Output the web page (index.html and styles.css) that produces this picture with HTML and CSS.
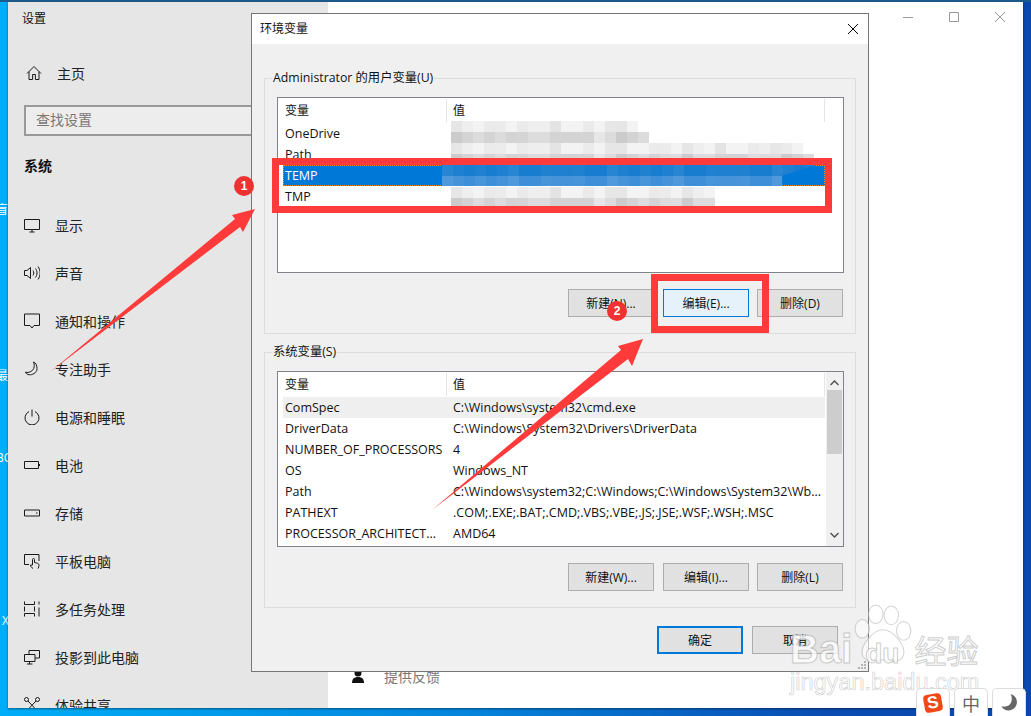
FILE: index.html
```
<!DOCTYPE html>
<html lang="zh">
<head>
<meta charset="utf-8">
<title>环境变量</title>
<link rel="stylesheet" href="styles.css">
</head>
<body>
<div class="desktop">
  <span class="edge edge-a">盲</span>
  <span class="edge edge-b">最</span>
  <span class="edge edge-c">BC</span>
  <span class="edge edge-d">X</span>

  <div class="settings">
    <aside class="sidebar">
      <div class="app-title">设置</div>
      <div class="home">
        <svg class="icon" viewBox="0 0 16 16"><path d="M1 8.500 8 1.500l7 7M3 6.800V14.500h3.600V9.500h2.800v5H13V6.800"/></svg>
        <span>主页</span>
      </div>
      <div class="search">查找设置</div>
      <div class="heading">系统</div>
      <nav class="nav">
        <div class="nav-item"><svg class="icon" viewBox="0 0 16 16"><path d="M.5 2.500h15v10H.5zM8 12.500v2.500M5.500 15h5"/></svg><span>显示</span></div>
        <div class="nav-item"><svg class="icon" viewBox="0 0 16 16"><path d="M.5 5.500h2.500L6.500 2.500v11L3 10.500H.5zM9 5.500c1 1.500 1 3.500 0 5M11.500 3.500c2 2.500 2 6.500 0 9M14 1.500c2.800 3.800 2.800 9.200 0 13"/></svg><span>声音</span></div>
        <div class="nav-item"><svg class="icon" viewBox="0 0 16 16"><path d="M.5 1h15v11.500h-5.500L8 15l-2-2.500H.5z"/></svg><span>通知和操作</span></div>
        <div class="nav-item"><svg class="icon" viewBox="0 0 16 16"><path d="M9.500 1C12 2 13 4.500 13 7.500c0 .8-.1 1.500-.3 2.100C11 13 7 14.500 4 13.500 2.800 13 1.800 12.200 1.300 11.300 4.800 12 8.500 10.500 9.700 7.500 10.500 5.500 10.400 3 9.500 1z"/></svg><span>专注助手</span></div>
        <div class="nav-item"><svg class="icon" viewBox="0 0 16 16"><path d="M8 .5v7M5 2.600a7 7 0 1 0 6 0"/></svg><span>电源和睡眠</span></div>
        <div class="nav-item"><svg class="icon" viewBox="0 0 16 16"><path d="M.5 4.500h14v7H.5zM15.500 7v2"/></svg><span>电池</span></div>
        <div class="nav-item"><svg class="icon" viewBox="0 0 16 16"><path d="M.5 5h15v6H.5zM12 8h1.500"/></svg><span>存储</span></div>
        <div class="nav-item"><svg class="icon" viewBox="0 0 16 16"><path d="M5 11.500H.5v-10h14.500V8M9 15.500c-1.500-1-2.500-2-2.500-3.500L8.500 12V6.500a1 1 0 0 1 2 0V9.500l3 .8c1 .3 1.500 1 1.500 2 0 1.200-.5 2.200-1 3.200"/></svg><span>平板电脑</span></div>
        <div class="nav-item"><svg class="icon" viewBox="0 0 16 16"><path d="M.5 .5v3h10v-3M.5 15.500v-3h10v3M.5 5.500v5M10.500 5.500v5M15 .5v3M15 6.500v9"/></svg><span>多任务处理</span></div>
        <div class="nav-item"><svg class="icon" viewBox="0 0 16 16"><path d="M5 5V1.500h10.500V9H11M.5 5.500H11V12.500H.5zM3 15h5.500M5.500 12.500V15"/></svg><span>投影到此电脑</span></div>
        <div class="nav-item"><svg class="icon" viewBox="0 0 16 16"><circle cx="2.500" cy="2.500" r="2"/><circle cx="13.500" cy="2.500" r="2"/><circle cx="2" cy="14" r="1.500"/><circle cx="14" cy="14" r="1.500"/><path d="M4 4l8 8.500M12 4 4 12.500"/></svg><span>体验共享</span></div>
      </nav>
    </aside>
    <main class="pane">
      <div class="controls">
        <span class="control"><svg viewBox="0 0 10 10"><path d="M0 5.500h10"/></svg></span>
        <span class="control"><svg viewBox="0 0 10 10"><path d="M.5.5h9v9h-9z"/></svg></span>
        <span class="control"><svg viewBox="0 0 10 10"><path d="M0 0l10 10M10 0 0 10"/></svg></span>
      </div>
      <div class="feedback">
        <svg class="feedback-icon" viewBox="0 0 12 14"><circle cx="6" cy="4" r="3.500"/><path d="M0 14c0-4 2-6 6-6s6 2 6 6z"/></svg>
        <span>提供反馈</span>
      </div>
    </main>
  </div>

  <section class="dialog">
    <header class="dialog-title">
      <span>环境变量</span>
      <svg class="dialog-close" viewBox="0 0 10 10"><path d="M0 0l10 10M10 0 0 10"/></svg>
    </header>
    <div class="dialog-body">
      <fieldset class="group">
        <legend>Administrator 的用户变量(U)</legend>
        <div class="list">
          <div class="list-head"><span class="col-name">变量</span><span class="col-value">值</span></div>
          <div class="row"><span>OneDrive</span><span></span></div>
          <div class="row"><span>Path</span><span></span></div>
          <div class="row selected"><span>TEMP</span><span></span></div>
          <div class="row"><span>TMP</span><span></span></div>
          <div class="mask m1"></div>
          <div class="mask m2"></div>
          <div class="mask m3"></div>
          <div class="mask m4"></div>
          <div class="mask m5"></div>
          <div class="mask m6"></div>
          <div class="mask m7"></div>
          <div class="mask m8"></div>
        </div>
        <div class="actions">
          <button class="btn">新建(N)...</button>
          <button class="btn hover">编辑(E)...</button>
          <button class="btn">删除(D)</button>
        </div>
      </fieldset>
      <fieldset class="group second">
        <legend>系统变量(S)</legend>
        <div class="list">
          <div class="list-head"><span class="col-name">变量</span><span class="col-value">值</span></div>
          <div class="row tinted"><span>ComSpec</span><span>C:\Windows\system32\cmd.exe</span></div>
          <div class="row"><span>DriverData</span><span>C:\Windows\System32\Drivers\DriverData</span></div>
          <div class="row"><span>NUMBER_OF_PROCESSORS</span><span>4</span></div>
          <div class="row"><span>OS</span><span>Windows_NT</span></div>
          <div class="row"><span>Path</span><span>C:\Windows\system32;C:\Windows;C:\Windows\System32\Wb...</span></div>
          <div class="row"><span>PATHEXT</span><span>.COM;.EXE;.BAT;.CMD;.VBS;.VBE;.JS;.JSE;.WSF;.WSH;.MSC</span></div>
          <div class="row"><span>PROCESSOR_ARCHITECT...</span><span>AMD64</span></div>
          <div class="scrollbar">
            <svg class="arrow" viewBox="0 0 9 6"><path d="M.5 5 4.500 1l4 4"/></svg>
            <div class="track"><div class="thumb"></div></div>
            <svg class="arrow" viewBox="0 0 9 6"><path d="M.5 1l4 4 4-4"/></svg>
          </div>
        </div>
        <div class="actions">
          <button class="btn">新建(W)...</button>
          <button class="btn">编辑(I)...</button>
          <button class="btn">删除(L)</button>
        </div>
      </fieldset>
      <div class="footer">
        <button class="btn primary">确定</button>
        <button class="btn">取消</button>
      </div>
    </div>
    <svg class="grip" viewBox="0 0 8 8"><path d="M6 0h2v2H6zM3 3h2v2H3zM6 3h2v2H6zM0 6h2v2H0zM3 6h2v2H3zM6 6h2v2H6z"/></svg>
  </section>

  <svg class="marks" viewBox="0 0 1031 716">
    <path class="mark-box" d="M275.500 161.500h553v48h-553zM654.500 277.500h111v52h-111z"/>
    <path class="mark-arrow" d="M50 372 235 219 232 215 255 209 243 232 240 227z"/>
    <path class="mark-arrow" d="M432 510 621 350 618 346 643 339 632 366 628 359z"/>
  </svg>
  <span class="badge badge-1">1</span>
  <span class="badge badge-2">2</span>

  <div class="watermark">
    <svg class="paw" viewBox="0 0 60 60"><ellipse cx="10" cy="24" rx="7" ry="9"/><ellipse cx="23" cy="10" rx="7" ry="9"/><ellipse cx="38" cy="11" rx="7" ry="9"/><ellipse cx="50" cy="26" rx="7" ry="9"/><path d="M30 25c9 0 22 14 20 24-2 8-12 7-20 5-8 2-18 3-20-5-2-10 11-24 20-24z"/></svg>
    <div class="wm-main"><span class="wm-bai">Bai</span><span class="wm-du">du</span><span class="wm-cn">经验</span></div>
    <div class="wm-url">jingyan.baidu.com</div>
  </div>

  <div class="tray">
    <span class="tile"><span class="sogou">S</span></span>
    <span class="tile tile-text">中</span>
    <span class="tile"><svg class="moon" viewBox="0 0 16 16"><path d="M9 0c3 .8 6 3.500 6 7.500C15 12 11.500 15.500 7 15.500 4 15.500 1.500 14 .5 11.500c4 1.200 8-.5 9.200-4C10.500 5 10.300 2 9 0z"/></svg></span>
  </div>
</div>
</body>
</html>
```
FILE: styles.css
```
* { box-sizing: border-box; }
html, body { margin: 0; padding: 0; }
body {
  font-family: "Open Sans", "Noto Sans CJK SC", sans-serif;
  font-size: 12px;
  color: #111;
  overflow: hidden;
}
.desktop {
  position: relative;
  width: 1031px;
  height: 716px;
  padding: 2px 8px 8px;
  overflow: hidden;
  background:
    linear-gradient(#1b5a8c 0 2px, transparent 2px),
    linear-gradient(90deg, #00adf8 0%, #0585dc 45%, #0a4cb2 80%, #0a47ae 100%);
}
.edge { position: absolute; left: -4px; color: #fff; font-size: 12px; line-height: 14px; }
.edge-a { top: 203px; }
.edge-b { top: 369px; }
.edge-c { top: 451px; }
.edge-d { top: 614px; left: 2px; }

.settings { position: relative; display: flex; height: 706px; box-shadow: 0 1px 2px rgba(0,0,0,.45); }
.sidebar { width: 320px; background: #e6e6e6; padding-left: 16px; overflow: hidden; flex: none; }
.app-title { height: 32px; line-height: 34px; margin-left: -2px; font-size: 12px; }
.icon { width: 16px; height: 16px; flex: none; fill: none; stroke: #1a1a1a; stroke-width: 1; }
.home { display: flex; align-items: center; gap: 15px; height: 48px; margin-top: 15px; padding-left: 2px; font-size: 14px; color: #222; }
.search {
  width: 300px;
  height: 31px;
  margin-top: 8px;
  border: 2px solid #999;
  background: #ededed;
  padding-left: 10px;
  font-size: 14px;
  line-height: 26px;
  color: #777;
}
.heading { height: 36px; margin-top: 12px; line-height: 36px; font-size: 14px; font-weight: 700; color: #111; }
.nav { margin-top: 17px; }
.nav-item { display: flex; align-items: center; gap: 15px; height: 48px; font-size: 14px; color: #222; }

.pane { flex: 1; background: #fff; display: flex; flex-direction: column; justify-content: space-between; }
.controls { display: flex; justify-content: flex-end; height: 30px; }
.control { display: flex; align-items: center; justify-content: center; width: 46px; }
.control svg { width: 10px; height: 10px; fill: none; stroke: #999; stroke-width: 1; }
.feedback { display: flex; align-items: center; gap: 20px; height: 20px; margin-bottom: 22px; padding-left: 24px; font-size: 14px; color: #777; }
.feedback-icon { width: 12px; height: 14px; fill: #111; }

.dialog {
  position: absolute;
  left: 251px;
  top: 13px;
  width: 618px;
  height: 659px;
  border: 1px solid #767676;
  background: #f0f0f0;
  display: flex;
  flex-direction: column;
}
.dialog-title { display: flex; align-items: center; justify-content: space-between; flex: none; height: 30px; background: #fff; padding: 0 10px 2px 8px; font-size: 12px; }
.dialog-close { width: 10px; height: 10px; fill: none; stroke: #000; stroke-width: 1; margin-top: 2px; }
.dialog-body { padding: 26px 12px 0; }
.group { margin: 0; min-width: 0; border: 1px solid #dcdcdc; padding: 11px 11px 16px 12px; }
.group legend { margin-left: -5px; padding: 0 1px; font-size: 12.3px; line-height: 16px; }
.second { margin-top: 10px; }
.list { position: relative; height: 176px; border: 1px solid #82828a; background: #fff; padding: 0 18px 0 5px; overflow: hidden; font-size: 12.5px; }
.list-head { display: grid; grid-template-columns: 164px 1fr; height: 25px; line-height: 24px; font-size: 12px; }
.list-head span { padding-left: 2px; height: 23px; margin-top: 1px; }
.col-name { border-right: 1px solid #e5e5e5; }
.col-value { border-right: 1px solid #e5e5e5; padding-left: 6px !important; }
.row { display: grid; grid-template-columns: 164px 1fr; height: 21px; line-height: 21px; white-space: nowrap; }
.row span { padding-left: 2px; overflow: hidden; }
.row span + span { padding-left: 6px; overflow: visible; }
.selected { background: #0078d7; color: #fff; outline: 1px dotted #f08c1e; outline-offset: -1px; }
.tinted { background: #efefef; }
.mask { position: absolute; left: 173px; height: 11px; }
.m1, .m3, .m7 {
  background:
    repeating-linear-gradient(90deg, rgba(0,0,0,.035) 0 11px, transparent 11px 33px),
    repeating-linear-gradient(90deg, rgba(0,0,0,.02) 0 22px, transparent 22px 77px),
    repeating-linear-gradient(90deg, transparent 0 44px, rgba(0,0,0,.03) 44px 55px),
    #f3f3f3;
}
.m2, .m4, .m8 {
  background:
    repeating-linear-gradient(90deg, rgba(0,0,0,.04) 0 11px, transparent 11px 33px),
    repeating-linear-gradient(90deg, rgba(0,0,0,.04) 0 22px, transparent 22px 55px),
    repeating-linear-gradient(90deg, transparent 0 66px, rgba(255,255,255,.3) 66px 77px),
    #dcdcdc;
}
.m1 { top: 23px; width: 187px; }
.m2 { top: 34px; width: 198px; }
.m3 { top: 45px; width: 352px; }
.m4 { top: 56px; width: 363px; }
.m5, .m6 {
  left: 164px;
  background:
    repeating-linear-gradient(90deg, rgba(255,255,255,.04) 0 11px, transparent 11px 33px),
    repeating-linear-gradient(90deg, rgba(255,255,255,.03) 0 22px, transparent 22px 55px),
    #187ccf;
}
.m5 { top: 67px; width: 373px; clip-path: polygon(0 0, 100% 0, 91% 100%, 0 100%); }
.m6 {
  top: 78px;
  width: 340px;
  height: 10px;
  background:
    repeating-linear-gradient(90deg, rgba(255,255,255,.05) 0 11px, transparent 11px 33px),
    repeating-linear-gradient(90deg, rgba(255,255,255,.04) 0 22px, transparent 22px 55px),
    #3e8fd8;
}
.m7 { top: 89px; width: 264px; }
.m8 { top: 100px; width: 264px; }

.scrollbar { position: absolute; top: 0; right: 0; bottom: 0; width: 17px; display: flex; flex-direction: column; align-items: center; background: #f0f0f0; padding: 8px 0; justify-content: space-between; }
.arrow { width: 9px; height: 6px; fill: none; stroke: #555; stroke-width: 1.5; flex: none; }
.track { flex: 1; width: 100%; margin-top: 4px; }
.thumb { width: 15px; height: 64px; margin: 0 auto; background: #cdcdcd; }

.actions { display: flex; justify-content: flex-end; gap: 9px; margin-top: 16px; padding-right: 1px; }
.actions .btn:last-child { margin-left: -1px; }
.btn {
  width: 86px;
  height: 28px;
  border: 1px solid #adadad;
  background: #e1e1e1;
  padding: 0;
  font: inherit;
  color: #111;
}
.hover { background: #e5f1fb; border-color: #0078d7; }
.primary { border: 2px solid #0078d7; }
.footer { display: flex; justify-content: flex-end; gap: 9px; margin-top: 18px; padding-right: 18px; }
.grip { position: absolute; right: 2px; bottom: 2px; width: 8px; height: 8px; fill: #b5b5b5; }

.marks { position: absolute; left: 0; top: 0; width: 1031px; height: 716px; pointer-events: none; }
.mark-box { fill: none; stroke: #ff3a3a; stroke-width: 7; }
.mark-arrow { fill: #ff3a3a; }
.badge { position: absolute; display: flex; align-items: center; justify-content: center; width: 20px; height: 20px; border-radius: 50%; background: #ee3232; color: #fff; font: 700 12px/1 "Liberation Sans", sans-serif; }
.badge-1 { left: 234px; top: 176px; }
.badge-2 { left: 607px; top: 301px; }

.watermark { position: absolute; left: 790px; top: 605px; width: 190px; height: 90px; color: rgba(255,255,255,.75); }
.paw { position: absolute; left: 62px; top: -1px; width: 62px; height: 62px; fill: rgba(255,255,255,.55); stroke: rgba(170,170,170,.5); stroke-width: 1; }
.wm-main { position: absolute; left: 0; top: 24px; font-family: "Liberation Sans", "Noto Sans CJK SC", sans-serif; font-weight: 700; font-size: 40px; line-height: 40px; -webkit-text-stroke: 1px rgba(160,160,160,.55); white-space: nowrap; }
.wm-du { margin-left: 13px; font-size: 28px; }
.wm-cn { margin-left: 15px; font-size: 32px; font-weight: 400; }
.wm-url { position: absolute; left: 0; top: 62px; font-family: "Liberation Sans", sans-serif; font-size: 23.5px; line-height: 30px; color: rgba(255,255,255,.6); -webkit-text-stroke: .7px rgba(170,170,170,.55); white-space: nowrap; }

.tray { position: absolute; left: 916px; bottom: 0; display: flex; gap: 4px; }
.tile { display: flex; align-items: center; justify-content: center; width: 34px; height: 28px; background: #fff; border: 1px solid #ddd; border-bottom: 0; border-radius: 5px 5px 0 0; }
.tile-text { font-size: 18px; color: #666; }
.sogou { display: block; width: 18px; height: 18px; background: #f04818; color: #fff; border-radius: 4px; transform: rotate(-10deg); font: 700 17px/18px "Liberation Sans", sans-serif; text-align: center; }
.moon { width: 17px; height: 17px; fill: #666; }
```
